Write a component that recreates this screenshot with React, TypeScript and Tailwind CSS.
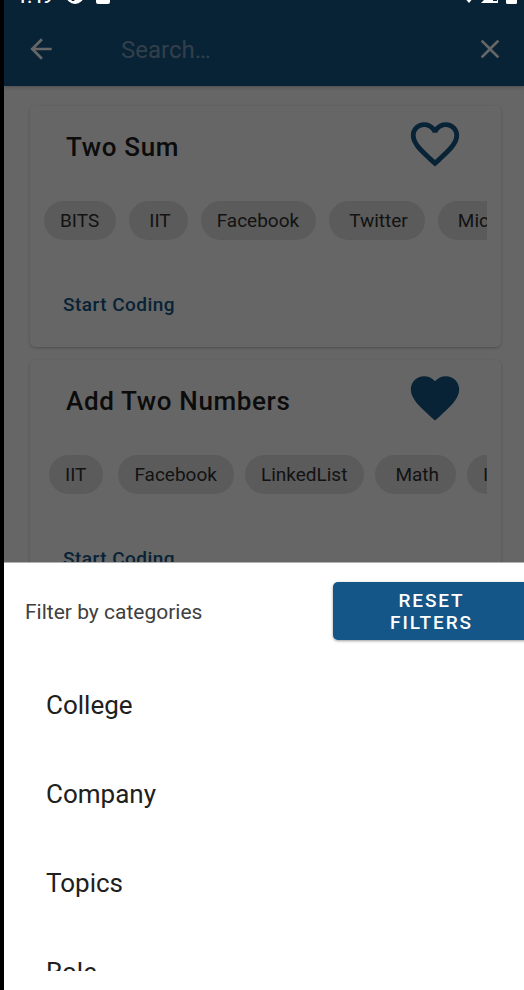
import React from "react";

type Chip = { label: string; className: string };
type Problem = { title: string; liked: boolean; rowClass: string; chips: Chip[] };

const problems: Problem[] = [
  {
    title: "Two Sum",
    liked: false,
    rowClass: "gap-[13px]",
    chips: [
      { label: "BITS", className: "pl-4" },
      { label: "IIT", className: "pl-5" },
      { label: "Facebook", className: "pl-4" },
      { label: "Twitter", className: "pl-5" },
      { label: "Microsoft", className: "pl-5" },
    ],
  },
  {
    title: "Add Two Numbers",
    liked: true,
    rowClass: "gap-[11px] pl-[5px]",
    chips: [
      { label: "IIT", className: "pl-4 mr-1" },
      { label: "Facebook", className: "pl-4" },
      { label: "LinkedList", className: "pl-4" },
      { label: "Math", className: "pl-5" },
      { label: "Infosys", className: "pl-4" },
    ],
  },
];

const categories = ["College", "Company", "Topics", "Role"];

function Heart({ filled }: { filled: boolean }) {
  return (
    <svg viewBox="0 0 24 24" className="size-[58px]" fill="#145687" aria-hidden="true">
      {filled ? (
        <path d="M12 21.35l-1.45-1.32C5.4 15.36 2 12.28 2 8.5 2 5.42 4.42 3 7.5 3c1.74 0 3.41.81 4.5 2.09C13.09 3.81 14.76 3 16.5 3 19.58 3 22 5.42 22 8.5c0 3.78-3.4 6.86-8.55 11.54L12 21.35z" />
      ) : (
        <path d="M16.5 3c-1.74 0-3.41.81-4.5 2.09C10.91 3.81 9.24 3 7.5 3 4.42 3 2 5.42 2 8.5c0 3.78 3.4 6.86 8.55 11.54L12 21.35l1.45-1.32C18.6 15.36 22 12.28 22 8.5 22 5.42 19.58 3 16.5 3zm-4.4 15.55l-.1.1-.1-.1C7.14 14.24 4 11.39 4 8.5 4 6.5 5.5 5 7.5 5c1.54 0 3.04.99 3.57 2.36h1.87C13.46 5.99 14.96 5 16.5 5c2 0 3.5 1.5 3.5 3.5 0 2.89-3.14 5.74-7.9 10.05z" />
      )}
    </svg>
  );
}

function StatusBar() {
  return (
    <div className="absolute inset-x-0 top-0 z-20 flex h-2 items-end justify-between overflow-hidden pr-[7px] pl-[13px] text-white">
      <div className="flex items-end">
        <span className="w-[49px] text-[18px] leading-[22px] font-medium">1:49</span>
        <svg viewBox="0 0 18 18" className="mb-1 h-[18px] w-[18px]" aria-hidden="true">
          <circle cx="9" cy="9" r="9" fill="#fff" />
          <path d="M4 12h6l-2 3H6z" fill="#072237" />
        </svg>
        <svg viewBox="0 0 14 18" className="mb-1 ml-3 h-[18px] w-[14px]" aria-hidden="true">
          <rect width="14" height="18" rx="2" fill="#fff" />
        </svg>
      </div>
      <div className="flex items-end">
        <svg viewBox="0 0 24 18" className="mb-[5px] h-[18px] w-6" aria-hidden="true">
          <path d="M0 4a17 17 0 0 1 24 0L12 18z" fill="#fff" />
        </svg>
        <svg viewBox="0 0 17 17" className="mb-[5px] h-[17px] w-[17px]" aria-hidden="true">
          <path d="M0 17L17 0v17z" fill="#fff" />
          <path d="M12 11h4v4h-4z" fill="#072237" />
        </svg>
        <svg viewBox="0 0 11 18" className="mb-1 ml-2 h-[18px] w-[11px]" aria-hidden="true">
          <rect width="11" height="18" rx="1.5" fill="#fff" />
        </svg>
      </div>
    </div>
  );
}

function ProblemCard({ problem }: { problem: Problem }) {
  return (
    <article className="h-[241px] rounded-[5px] bg-white px-[14px] pt-[9px] shadow-[0_1px_3px_rgba(0,0,0,0.25)]">
      <div className="flex h-[58px] items-center justify-between pr-[23px] pl-[22px]">
        <h2 className="pt-1.5 text-[26px] leading-8 font-medium tracking-wide text-[#202020]">{problem.title}</h2>
        <button type="button" aria-label={`Like ${problem.title}`}>
          <Heart filled={problem.liked} />
        </button>
      </div>
      <div className="mt-7 overflow-hidden">
        <ul className={`flex ${problem.rowClass}`}>
          {problem.chips.map((chip) => (
            <li
              key={chip.label}
              className={`h-[39px] shrink-0 rounded-full bg-[#e3e3e3] pr-[17px] text-[19px] leading-[39px] text-[#303030] ${chip.className}`}
            >
              {chip.label}
            </li>
          ))}
        </ul>
      </div>
      <button
        type="button"
        className="mt-[53px] ml-[19px] block text-[19px] leading-6 font-medium tracking-wide text-[#145687]"
      >
        Start Coding
      </button>
    </article>
  );
}

export default function App() {
  return (
    <div className="h-screen overflow-hidden bg-black pl-1 font-['Roboto',sans-serif]">
      <div className="relative h-full overflow-hidden bg-white">
        <StatusBar />
        <header className="flex h-[86px] items-center bg-[#145687] pt-3 pr-[18px] pl-[21px] shadow-[0_1px_4px_rgba(0,0,0,0.25)]">
          <button type="button" aria-label="Back">
            <svg viewBox="0 0 24 24" className="size-8" fill="#fff" aria-hidden="true">
              <path d="M20 11H7.83l5.59-5.59L12 4l-8 8 8 8 1.41-1.41L7.83 13H20v-2z" />
            </svg>
          </button>
          <input
            type="text"
            aria-label="Search"
            placeholder="Search…"
            className="ml-16 min-w-0 flex-1 bg-transparent pt-0.5 text-[24px] leading-8 text-white outline-none placeholder:text-[#7f9fb8]"
          />
          <button type="button" aria-label="Clear search">
            <svg viewBox="0 0 24 24" className="size-8" fill="#fff" aria-hidden="true">
              <path d="M19 6.41L17.59 5 12 10.59 6.41 5 5 6.41 10.59 12 5 17.59 6.41 19 12 13.41 17.59 19 19 17.59 13.41 12z" />
            </svg>
          </button>
        </header>
        <main className="flex flex-col gap-[13px] pt-5 pr-[23px] pl-[26px]">
          {problems.map((problem) => (
            <ProblemCard key={problem.title} problem={problem} />
          ))}
        </main>

        <div className="absolute inset-0 bg-black/60" />

        <section
          aria-label="Filters"
          className="absolute inset-x-0 bottom-0 overflow-hidden bg-white pt-[19px] pb-[19px] shadow-[0_-1px_0_#b0b0b0]"
        >
          <div className="flex items-center justify-between pl-[21px]">
            <p className="pt-0.5 text-[21px] leading-7 text-[#404040]">Filter by categories</p>
            <button
              type="button"
              className="-mr-1.5 w-[197px] shrink-0 rounded-[5px] bg-[#145687] pt-2 pb-1.5 text-[19px] leading-[22px] font-medium tracking-widest text-white shadow-[0_1px_3px_rgba(0,0,0,0.4)]"
            >
              RESET
              <br />
              FILTERS
            </button>
          </div>
          <ul className="mt-[21px] h-[310px] overflow-hidden">
            {categories.map((category) => (
              <li key={category}>
                <button
                  type="button"
                  className="block h-[89px] w-full pl-[42px] text-left text-[26px] text-[#202020]"
                >
                  {category}
                </button>
              </li>
            ))}
          </ul>
        </section>
      </div>
    </div>
  );
}
